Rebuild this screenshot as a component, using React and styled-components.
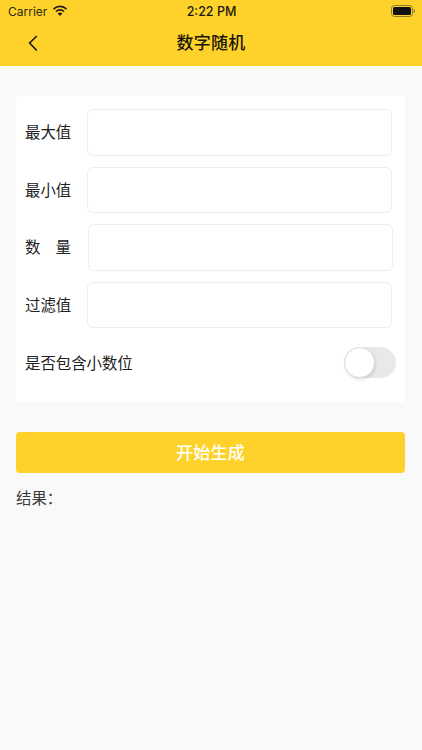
import React from 'react';
import styled, { createGlobalStyle } from 'styled-components';

const GlobalStyle = createGlobalStyle`
  html, body {
    margin: 0;
    padding: 0;
    background: #f9f9f9;
  }
  * {
    box-sizing: border-box;
  }
`;

const Page = styled.div`
  width: 422px;
  height: 750px;
  overflow: hidden;
  background: #f9f9f9;
  font-family: "Inter", "Noto Sans CJK SC", sans-serif;
  color: #222;
`;

const Header = styled.header`
  height: 66px;
  background: #fed22a;
  display: flex;
  flex-direction: column;
`;

const StatusBar = styled.div`
  height: 22px;
  padding: 0 7px 0 8px;
  display: grid;
  grid-template-columns: 1fr auto 1fr;
  align-items: center;
  font-size: 12.5px;
  color: #1c1a10;
`;

const Carrier = styled.div`
  display: flex;
  align-items: center;
  gap: 5px;
  font-size: 12px;
  color: #2e2a14;
`;

const Time = styled.div`
  font-weight: 500;
`;

const Battery = styled.div`
  justify-self: end;
  width: 24px;
  height: 12px;
  display: flex;
  align-items: center;
`;

const NavBar = styled.div`
  flex: 1;
  position: relative;
  display: flex;
  align-items: center;
  justify-content: center;
  padding-bottom: 6px;
`;

const BackButton = styled.button`
  position: absolute;
  left: 26px;
  top: 11px;
  padding: 0;
  border: 0;
  background: none;
  display: flex;
`;

const Title = styled.h1`
  margin: 0;
  font-size: 17px;
  font-weight: 500;
  font-family: "Noto Sans CJK SC", sans-serif;
  color: #1a1708;
  letter-spacing: 0.3px;
`;

const Content = styled.main`
  padding: 30px 16px 0;
`;

const FormCard = styled.section`
  width: 389px;
  height: 306px;
  background: #fff;
  border-radius: 2px;
  padding: 13px 9px 0;
  display: flex;
  flex-direction: column;
`;

const FieldRow = styled.div`
  display: flex;
  align-items: center;
  height: 46.5px;
  margin-bottom: ${props => props.$gap}px;
`;

const FieldLabel = styled.label`
  width: 62px;
  flex: none;
  font-size: 15.4px;
  line-height: 20px;
  position: relative;
  top: -1px;
  color: #222;
  font-family: "Noto Sans CJK SC", sans-serif;
  display: flex;
  justify-content: ${props => (props.$spread ? 'space-between' : 'flex-start')};
  padding-right: ${props => (props.$spread ? '16px' : '0')};
`;

const TextInput = styled.input`
  width: 305px;
  height: 46.5px;
  margin-left: ${props => props.$shift || 0}px;
  border: 1px solid #eeeeee;
  border-radius: 6px;
  background: #fff;
  outline: none;
`;

const ToggleRow = styled.div`
  display: flex;
  align-items: center;
  justify-content: space-between;
  height: 31px;
`;

const ToggleLabel = styled.span`
  font-size: 15.4px;
  line-height: 20px;
  position: relative;
  top: -0.5px;
  color: #222;
  font-family: "Noto Sans CJK SC", sans-serif;
`;

const Toggle = styled.div`
  position: relative;
  width: 52px;
  height: 31px;
  border-radius: 15.5px;
  background: #e9e9eb;
`;

const ToggleKnob = styled.span`
  position: absolute;
  left: 0;
  top: 0;
  width: 31px;
  height: 31px;
  border-radius: 50%;
  background: #fff;
  border: 1px solid #dedede;
  box-shadow: 1px 2px 3px rgba(0, 0, 0, 0.1);
`;

const SubmitButton = styled.button`
  display: block;
  width: 389px;
  height: 41px;
  margin-top: 30px;
  border: 0;
  border-radius: 4px;
  background: #fed22a;
  color: #fff;
  font-size: 17px;
  font-weight: 500;
  font-family: "Noto Sans CJK SC", sans-serif;
  letter-spacing: 0.3px;
  padding: 0 0 2px;
`;

const Result = styled.p`
  margin: 13px 0 0;
  font-size: 15.4px;
  line-height: 22px;
  color: #3a3a3a;
  font-family: "Noto Sans CJK SC", sans-serif;
`;

const WifiIcon = () => (
  <svg width="16" height="12" viewBox="0 0 16 12" fill="#1c1a10">
    <path d="M8 2.3c2.3 0 4.4.9 6 2.4l1.1-1.2A10.4 10.4 0 0 0 8 .6 10.4 10.4 0 0 0 .9 3.5L2 4.7a8.7 8.7 0 0 1 6-2.400z" />
    <path d="M8 5.8c1.3 0 2.5.5 3.400 1.300l1.200-1.200A6.900 6.900 0 0 0 8 4.100a6.900 6.900 0 0 0-4.600 1.800l1.200 1.200A5.100 5.100 0 0 1 8 5.800z" />
    <path d="M8 7.600c-.9 0-1.700.3-2.300.9L8 11l2.300-2.500c-.6-.6-1.400-.9-2.300-.9z" />
  </svg>
);

const BatteryIcon = () => (
  <svg width="24" height="12" viewBox="0 0 24 12">
    <rect x="0.5" y="0.5" width="21" height="11" rx="3" fill="none" stroke="#8d7c22" />
    <rect x="2" y="2" width="18" height="8" rx="1.6" fill="#111" />
    <path d="M22.7 4v4c.8-.3 1.3-1.100 1.3-2s-.5-1.700-1.300-2z" fill="#8d7c22" />
  </svg>
);

const BackIcon = () => (
  <svg width="14" height="20" viewBox="0 0 14 20" fill="none" stroke="#1a1708" strokeWidth="1.6">
    <path d="M10.8 3 3.6 10l7.2 7.500" />
  </svg>
);

const App = () => {
  return (
    <Page>
      <GlobalStyle />
      <Header>
        <StatusBar>
          <Carrier>
            Carrier
            <WifiIcon />
          </Carrier>
          <Time>2:22 PM</Time>
          <Battery>
            <BatteryIcon />
          </Battery>
        </StatusBar>
        <NavBar>
          <BackButton aria-label="back">
            <BackIcon />
          </BackButton>
          <Title>数字随机</Title>
        </NavBar>
      </Header>
      <Content>
        <FormCard>
          <FieldRow $gap={11}>
            <FieldLabel>最大值</FieldLabel>
            <TextInput />
          </FieldRow>
          <FieldRow $gap={11}>
            <FieldLabel>最小值</FieldLabel>
            <TextInput />
          </FieldRow>
          <FieldRow $gap={11}>
            <FieldLabel $spread>
              <span>数</span>
              <span>量</span>
            </FieldLabel>
            <TextInput $shift={0.5} />
          </FieldRow>
          <FieldRow $gap={19}>
            <FieldLabel>过滤值</FieldLabel>
            <TextInput />
          </FieldRow>
          <ToggleRow>
            <ToggleLabel>是否包含小数位</ToggleLabel>
            <Toggle>
              <ToggleKnob />
            </Toggle>
          </ToggleRow>
        </FormCard>
        <SubmitButton>开始生成</SubmitButton>
        <Result>结果：</Result>
      </Content>
    </Page>
  );
};

export default App;
